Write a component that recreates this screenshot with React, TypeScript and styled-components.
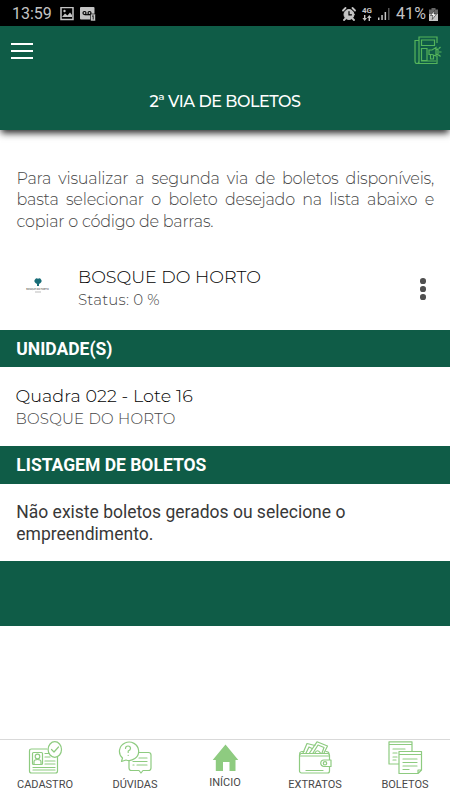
import React from 'react';
import styled, { createGlobalStyle } from 'styled-components';

const GREEN = '#0f5c47';
const LEAF = '#8ecb80';
const SOFT = '"Montserrat", Inter, sans-serif';

const GlobalStyle = createGlobalStyle`
  * { box-sizing: border-box; }
  body { margin: 0; background: #fff; }
`;

const Screen = styled.div`
  width: 450px;
  height: 800px;
  display: flex;
  flex-direction: column;
  overflow: hidden;
  background: #fff;
  font-family: Roboto, sans-serif;
`;

const StatusBar = styled.div`
  height: 26px;
  flex: none;
  background: #000;
  color: #c4c4c4;
  display: flex;
  align-items: center;
  justify-content: space-between;
  padding: 2px 12px 0 12px;
`;

const StatusGroup = styled.div<{ $gap: number }>`
  display: flex;
  align-items: center;
  gap: ${(p) => p.$gap}px;
`;

const StatusText = styled.span<{ $spacing: number }>`
  font-size: 16px;
  line-height: 20px;
  letter-spacing: ${(p) => p.$spacing}px;
`;

const Network = styled.div`
  display: flex;
  flex-direction: column;
  align-items: center;
  font-size: 8px;
  font-weight: 700;
  line-height: 8px;
`;

const Header = styled.header`
  height: 104px;
  flex: none;
  background: ${GREEN};
  box-shadow: 0 4px 7px -1px rgba(0, 0, 0, 0.85);
`;

const Toolbar = styled.div`
  height: 49px;
  display: flex;
  align-items: center;
  justify-content: space-between;
  padding: 0 8px 0 11px;
`;

const MenuButton = styled.button`
  display: flex;
  flex-direction: column;
  gap: 5px;
  padding: 0;
  border: 0;
  background: none;
`;

const MenuLine = styled.span`
  width: 22px;
  height: 2px;
  background: #fff;
`;

const Title = styled.h1`
  margin: 0;
  height: 53px;
  text-align: center;
  color: #fff;
  font: 500 16px/54px ${SOFT};
  letter-spacing: -0.45px;
`;

const Intro = styled.p`
  margin: 37.5px 16px 0 16.5px;
  height: 64.5px;
  font: 300 16px/21.7px ${SOFT};
  letter-spacing: -0.22px;
  color: #484848;
  text-align: justify;
`;

const Project = styled.div`
  height: 98px;
  flex: none;
  display: flex;
  padding: 33px 24.5px 0 16px;
`;

const ProjectLogo = styled.div`
  width: 62px;
  padding: 13px 0 0 10.5px;
`;

const LogoName = styled.div`
  width: 22px;
  display: flex;
  flex-direction: column;
  align-items: center;
  margin-top: 2px;
  font: 2.3px/3px Inter, sans-serif;
  white-space: nowrap;
  color: #333;
`;

const Lines = styled.div`
  flex: 1;
`;

const Name = styled.div<{ $spacing: number }>`
  font: 300 17.5px/24px ${SOFT};
  letter-spacing: ${(p) => p.$spacing}px;
  color: #000;
`;

const Detail = styled.div<{ $spacing: number }>`
  font: 300 15px/21px ${SOFT};
  letter-spacing: ${(p) => p.$spacing}px;
  color: #444;
`;

const MoreButton = styled.button`
  align-self: flex-start;
  display: flex;
  flex-direction: column;
  gap: 2.5px;
  padding: 0;
  margin-top: 13px;
  border: 0;
  background: none;
`;

const Dot = styled.span`
  width: 5.7px;
  height: 5.7px;
  border-radius: 50%;
  background: #505050;
`;

const Heading = styled.h2<{ $height: number }>`
  margin: 0;
  flex: none;
  height: ${(p) => p.$height}px;
  padding-left: 16.3px;
  background: ${GREEN};
  color: #fff;
  font: 700 17.5px/38px Roboto, sans-serif;
`;

const Unit = styled.div`
  height: 79px;
  flex: none;
  padding: 17px 15px 0 15.4px;
`;

const Message = styled.p`
  margin: 0;
  height: 77px;
  flex: none;
  padding: 18px 16.3px 0;
  font-size: 17.5px;
  line-height: 21.7px;
  color: #383838;
`;

const Band = styled.div`
  height: 65px;
  flex: none;
  background: ${GREEN};
`;

const Tabs = styled.nav`
  margin-top: auto;
  height: 61px;
  flex: none;
  display: grid;
  grid-template-columns: repeat(5, 1fr);
  border-top: 1px solid #d9d9d9;
`;

const Tab = styled.a<{ $raise?: boolean }>`
  display: flex;
  flex-direction: column;
  align-items: center;
  padding-top: ${(p) => (p.$raise ? 0 : 1)}px;
  font-size: 11px;
  line-height: 14px;
  color: #484848;
  svg {
    display: block;
    margin-bottom: ${(p) => (p.$raise ? 1 : 2)}px;
  }
`;

const stroke = {
  fill: 'none',
  stroke: LEAF,
  strokeWidth: 1.2,
  strokeLinecap: 'round' as const,
  strokeLinejoin: 'round' as const,
};

const CadastroIcon = () => (
  <svg width="36" height="35" viewBox="0 0 36 35" {...stroke}>
    <path d="M20 8H4.500Q2.500 8 2.500 10V30Q2.500 32 4.500 32H28.500Q30.500 32 30.500 30V16" />
    <rect x="5.500" y="11.500" width="10" height="12" rx="1" />
    <circle cx="10.500" cy="15.500" r="2.300" />
    <path d="M7 23V21Q7 18.500 10.500 18.500T14 21V23M18 12.500h4M18 16h5M18 20h10M18 23h10M6 26.500h22M6 29h22" />
    <ellipse cx="27.800" cy="8.500" rx="6.700" ry="7.800" fill="#fff" />
    <path d="M24.500 8.500L27 11L31.500 6" />
  </svg>
);

const DuvidasIcon = () => (
  <svg width="36" height="35" viewBox="0 0 36 35" {...stroke}>
    <path d="M22 11.500H31.500Q34 11.500 34 14V27Q34 29.500 31.500 29.500H26L24 32L22 29.500H14.500Q12 29.500 12 27V20" />
    <path d="M22 17H30M16 20.500H30M20 24H30M16 24H17" />
    <path d="M5.500 17L4.500 20.500L9 19A9.600 9.200 0 1 0 5.500 17Z" fill="#fff" />
    <path d="M8.500 7.500Q8.500 5 11 5T13.500 7.500Q13.500 9 11.200 10V11.500M11.200 14.300V14.500" />
  </svg>
);

const InicioIcon = () => (
  <svg width="28" height="35" viewBox="0 0 28 35">
    <path d="M14.500 4.500L27.300 20H24.500V31H18.500V22H12V31H4.800V20H1.700Z" fill={LEAF} />
  </svg>
);

const ExtratosIcon = () => (
  <svg width="36" height="35" viewBox="0 0 36 35" {...stroke}>
    <path d="M6 12L10 2.500L18 4.500M9 12L12 6L15 7.500M12.500 12L20 .800L30.500 5L27 12M16 12L21 4L27 6.500L25 12M18 12Q20 7.500 23.500 12" />
    <rect x="2.500" y="12.500" width="30" height="19.500" rx="2" />
    <path d="M3 13.500Q2 11 5 10.500H7M29 10.500Q32 10.500 32 13M3 15H32M9 29.500H26" />
    <path d="M34 19V25.500H27A3.200 3.200 0 0 1 27 19Z" fill="#fff" />
    <circle cx="28" cy="22.300" r="1.700" />
  </svg>
);

const BoletosIcon = () => (
  <svg width="36" height="35" viewBox="0 0 36 35" {...stroke}>
    <path d="M12 23H2V.800H25V10M2 3.500H25M6 8H18M6 12H10M6 16H10M6 19H9" />
    <path d="M12 10.500H34.500V29L31 32.500H12ZM12 13.500H34.500M16 18H30M16 21.500H30M16 25H30M16 28.500H22M31 32.500V29H34.500" fill="#fff" />
  </svg>
);

const NewsIcon = () => (
  <svg width="28" height="29" viewBox="0 0 28 29" fill="none" stroke="#55b45b" strokeWidth="1.200">
    <path d="M5 27.500V1H23V7M23 20V27.500H3Q1 27.500 1 25V4.500H4.500M5 25Q5 27.500 3 27.500" />
    <path d="M7.500 4H20.500V9.500H7.500ZM7.500 12.500H13V24.500H7.500ZM22 25H7" />
    <path d="M15 14H18L22 11.500V20L18 18.500H15ZM16.500 18.500V23H19.500V19M22 14L24 13V19L22 18M25 16H27.500M25 12.500L26.500 11M25 19L26.500 20.500" />
  </svg>
);

const PictureIcon = () => (
  <svg width="14" height="14" viewBox="0 0 14 14">
    <path d="M1 .500H13V12.500H1Z" fill="none" stroke="#c4c4c4" strokeWidth="1.500" />
    <path d="M2 10L5 6.500L7.500 8.500L10 5.500L12 8V10Z" fill="#c4c4c4" />
    <circle cx="4.500" cy="4" r="1.200" fill="#c4c4c4" />
  </svg>
);

const VoicemailIcon = () => (
  <svg width="16" height="14" viewBox="0 0 16 14">
    <rect x="0" y="0" width="14.500" height="12.500" rx="1" fill="#c4c4c4" />
    <g fill="none" stroke="#000" strokeWidth="1.200">
      <circle cx="4.500" cy="6" r="1.500" />
      <circle cx="9.500" cy="6" r="1.500" />
      <path d="M4.500 7.700H12" />
    </g>
    <rect x="10.500" y="7" width="5" height="7" fill="#c4c4c4" stroke="#000" strokeWidth=".6" />
    <path d="M12 9.500L13.200 8.500V12.500" fill="none" stroke="#000" strokeWidth=".8" />
  </svg>
);

const AlarmIcon = () => (
  <svg width="14" height="14" viewBox="0 0 14 14" stroke="#c4c4c4" strokeLinecap="round">
    <circle cx="7" cy="7.500" r="5" fill="#c4c4c4" />
    <path d="M1 3.500L3.500 1M13 3.500L10.500 1M3.500 11.500L2 13M10.500 11.500L12 13" strokeWidth="1.800" />
    <path d="M7 4.500V7.800H9.500" fill="none" stroke="#000" strokeWidth="1.200" />
  </svg>
);

const ArrowsIcon = () => (
  <svg width="10" height="6" viewBox="0 0 10 6" fill="#c4c4c4">
    <path d="M2 0H3.400V3H5L2.700 6L.400 3H2ZM6.600 6H8V3H9.600L7.300 0L5 3H6.600Z" />
  </svg>
);

const SignalIcon = () => (
  <svg width="12" height="12" viewBox="0 0 12 12" fill="#c4c4c4">
    <path d="M0 9.500H1.500V12H0ZM3.300 7H4.800V12H3.300ZM6.600 4H8.100V12H6.600Z" />
    <path d="M10 0H11.500V12H10Z" fill="#555" />
  </svg>
);

const BatteryIcon = () => (
  <svg width="9" height="13" viewBox="0 0 9 13">
    <path d="M2.500 0H6.500V1.500H9V6H0V1.500H2.500Z" fill="#666" />
    <path d="M0 6H9V13H0Z" fill="#c4c4c4" />
    <path d="M5.500 2.500L1.500 7.500H4L3.200 11.500L7.500 6H5Z" fill="#fff" stroke="#222" strokeWidth=".6" />
  </svg>
);

const TreeMark = styled.svg`
  display: block;
`;

const TreeLogo = () => (
  <TreeMark width="22" height="8" viewBox="0 0 22 8">
    <path d="M8 1.500Q9.500-.500 11 .800Q13-.500 14 1.500Q15.500 3.500 13.500 5L12 6V8H10V6L8.500 5Q6.500 3.500 8 1.500Z" fill="#196d78" />
  </TreeMark>
);

const LogoRule = () => (
  <TreeMark width="22" height="2" viewBox="0 0 22 2">
    <path d="M8 1H14" stroke="#bbb" />
  </TreeMark>
);

const tabs = [
  { label: 'CADASTRO', Icon: CadastroIcon },
  { label: 'DÚVIDAS', Icon: DuvidasIcon },
  { label: 'INÍCIO', Icon: InicioIcon, raise: true },
  { label: 'EXTRATOS', Icon: ExtratosIcon },
  { label: 'BOLETOS', Icon: BoletosIcon },
];

export default function App() {
  return (
    <Screen>
      <GlobalStyle />
      <StatusBar>
        <StatusGroup $gap={8}>
          <StatusText $spacing={0}>13:59</StatusText>
          <StatusGroup $gap={6}>
            <PictureIcon />
            <VoicemailIcon />
          </StatusGroup>
        </StatusGroup>
        <StatusGroup $gap={6}>
          <AlarmIcon />
          <Network>
            4G
            <ArrowsIcon />
          </Network>
          <SignalIcon />
          <StatusGroup $gap={3}>
            <StatusText $spacing={0.1}>41%</StatusText>
            <BatteryIcon />
          </StatusGroup>
        </StatusGroup>
      </StatusBar>
      <Header>
        <Toolbar>
          <MenuButton aria-label="Menu">
            <MenuLine />
            <MenuLine />
            <MenuLine />
          </MenuButton>
          <NewsIcon />
        </Toolbar>
        <Title>2ª VIA DE BOLETOS</Title>
      </Header>
      <Intro>
        Para visualizar a segunda via de boletos disponíveis, basta selecionar o boleto desejado na lista abaixo e
        copiar o código de barras.
      </Intro>
      <Project>
        <ProjectLogo>
          <TreeLogo />
          <LogoName>
            BOSQUE DO HORTO
            <LogoRule />
          </LogoName>
        </ProjectLogo>
        <Lines>
          <Name $spacing={0.02}>BOSQUE DO HORTO</Name>
          <Detail $spacing={0.2}>Status: 0 %</Detail>
        </Lines>
        <MoreButton aria-label="Mais">
          <Dot />
          <Dot />
          <Dot />
        </MoreButton>
      </Project>
      <Heading $height={37}>UNIDADE(S)</Heading>
      <Unit>
        <Name $spacing={0.1}>Quadra 022 - Lote 16</Name>
        <Detail $spacing={0.25}>BOSQUE DO HORTO</Detail>
      </Unit>
      <Heading $height={38}>LISTAGEM DE BOLETOS</Heading>
      <Message>Não existe boletos gerados ou selecione o empreendimento.</Message>
      <Band />
      <Tabs>
        {tabs.map(({ label, Icon, raise }) => (
          <Tab key={label} $raise={raise}>
            <Icon />
            {label}
          </Tab>
        ))}
      </Tabs>
    </Screen>
  );
}
